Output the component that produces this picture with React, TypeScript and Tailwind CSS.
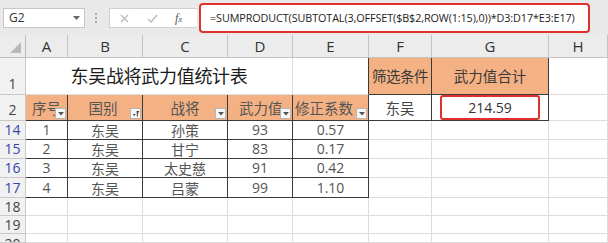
const CJK = "font-['Noto_Sans_CJK_SC','Noto_Sans',sans-serif]";
const NUM = "font-['Open_Sans','Noto_Sans_CJK_SC',sans-serif]";

const cols = ["A", "B", "C", "D", "E", "F", "G", "H"];

const rows = [
  { n: "14", no: "1", country: "东吴", name: "孙策", power: "93", k: "0.57" },
  { n: "15", no: "2", country: "东吴", name: "甘宁", power: "83", k: "0.17" },
  { n: "16", no: "3", country: "东吴", name: "太史慈", power: "91", k: "0.42" },
  { n: "17", no: "4", country: "东吴", name: "吕蒙", power: "99", k: "1.10" },
];

function FilterBtn({ active = false }: { active?: boolean }) {
  return (
    <span className="absolute right-px bottom-px w-[11px] h-[11px] bg-[#f7f7f7] border border-[#b5b5b5] flex items-center justify-center">
      {active ? (
        <svg width="8" height="8" viewBox="0 0 8 8">
          <path d="M4.5 1 L7.5 1 L5.8 3.5 L5.8 7 L4.8 6.2 L4.8 3.5 Z" fill="#444" />
          <path d="M0.8 4 L3.6 4 L2.2 6 Z" fill="#444" />
        </svg>
      ) : (
        <svg width="6" height="4" viewBox="0 0 6 4">
          <path d="M0 0 L6 0 L3 3.5 Z" fill="#555" />
        </svg>
      )}
    </span>
  );
}

function Gap() {
  return <div className="border-r border-b border-[#dcdcdc]" />;
}

function RowHead({ n, blue = false, align = "items-center" }: { n: string; blue?: boolean; align?: string }) {
  return (
    <div
      className={`bg-[#f1f1f1] border-r border-b border-[#c9c9c9] overflow-hidden flex ${align} justify-center text-[14px] leading-none ${NUM} ${
        blue ? "text-[#3646b0]" : "text-[#444]"
      }`}
    >
      {n}
    </div>
  );
}

export default function App() {
  return (
    <div className="w-[608px] h-[243px] overflow-hidden bg-white select-none">
      {/* formula bar */}
      <div className="h-[35px] bg-[#e9e9e9] flex items-start relative">
        <div className={`ml-[3px] mt-[8px] w-[82px] h-[20px] bg-white border border-[#c6c6c6] flex items-center pl-[5px] pr-[4px] text-[12px] text-[#333] ${NUM}`}>
          <span className="flex-1">G2</span>
          <svg width="7" height="4" viewBox="0 0 7 4">
            <path d="M0 0 L7 0 L3.5 4 Z" fill="#666" />
          </svg>
        </div>
        <div className="ml-[10px] mt-[13px] flex flex-col gap-[2px]">
          <span className="w-[2px] h-[2px] bg-[#aaa]" />
          <span className="w-[2px] h-[2px] bg-[#aaa]" />
          <span className="w-[2px] h-[2px] bg-[#aaa]" />
        </div>
        <div className="ml-[12px] mt-[8px] w-[88px] h-[20px] bg-white border-y border-l border-[#d0d0d0] flex items-center">
          <svg className="ml-[10px]" width="9" height="9" viewBox="0 0 9 9">
            <path d="M1 1 L8 8 M8 1 L1 8" stroke="#b8b8b8" strokeWidth="1.2" />
          </svg>
          <svg className="ml-[18px]" width="11" height="9" viewBox="0 0 11 9">
            <path d="M1 5 L4 8 L10 1" stroke="#b8b8b8" strokeWidth="1.3" fill="none" />
          </svg>
          <span className="ml-[17px] text-[12px] italic text-[#555] font-['Liberation_Serif',serif]">
            f<span className="text-[9px]">x</span>
          </span>
        </div>
        <div className="absolute left-[199px] top-[3px] w-[391px] h-[30px] bg-white border-2 border-[#e0322c] rounded-[4px] flex items-center pl-[9px]">
          <span className={`text-[10.8px] text-[#222] tracking-[-0.1px] whitespace-nowrap ${NUM}`}>
            =SUMPRODUCT(SUBTOTAL(3,OFFSET($B$2,ROW(1:15),0))*D3:D17*E3:E17)
          </span>
        </div>
      </div>

      {/* sheet grid */}
      <div className="grid grid-cols-[26px_42px_75px_85px_65px_76px_63px_117px_59px] grid-rows-[23px_37px_26px_19px_19px_19px_20px_18px_18px_9px]">
        {/* column headers */}
        <div className="bg-[#ececec] border-r border-b border-[#bdbdbd] relative">
          <svg className="absolute right-[4px] bottom-[4px]" width="11" height="11" viewBox="0 0 11 11">
            <path d="M11 0 L11 11 L0 11 Z" fill="#b9b9b9" />
          </svg>
        </div>
        {cols.map((c) => (
          <div
            key={c}
            className={`bg-[#ececec] border-r border-b border-[#c3c3c3] flex items-center justify-center text-[15px] text-[#333] ${NUM}`}
          >
            {c}
          </div>
        ))}

        {/* row 1 */}
        <RowHead n="1" align="items-end pb-[3px]" />
        <div className={`col-span-4 border-r border-b border-[#dcdcdc] flex items-center justify-center pb-[2px] text-[18px] text-[#1a1a1a] tracking-[-0.3px] ${CJK}`}>
          东吴战将武力值统计表
        </div>
        <div className="border-r border-b border-r-[#3a3a3a] border-b-[#dcdcdc]" />
        <div className={`bg-[#f4b183] border-r border-b border-[#3a3a3a] flex items-center justify-center text-[14.5px] text-[#3a3a3a] tracking-[-0.5px] ${CJK}`}>
          筛选条件
        </div>
        <div className={`bg-[#f4b183] border-r border-b border-[#3a3a3a] flex items-center justify-center text-[14.5px] text-[#3a3a3a] ${CJK}`}>
          武力值合计
        </div>
        <Gap />

        {/* row 2 headers */}
        <RowHead n="2" align="items-end pb-[3px]" />
        {[
          { t: "序号", active: false, cls: "justify-start pl-[6px]" },
          { t: "国别", active: true, cls: "justify-center pr-[4px]" },
          { t: "战将", active: false, cls: "justify-center" },
          { t: "武力值", active: false, cls: "justify-start pl-[11px]" },
          { t: "修正系数", active: false, cls: "justify-start pl-[2px]" },
        ].map((h) => (
          <div
            key={h.t}
            className={`relative overflow-hidden bg-[#f4b183] border-r border-b border-[#3a3a3a] flex items-center ${h.cls} text-[14.5px] text-[#555] whitespace-nowrap ${CJK}`}
          >
            {h.t}
            <FilterBtn active={h.active} />
          </div>
        ))}
        <div className={`border-r border-b border-[#3a3a3a] flex items-center justify-center text-[14.5px] text-[#444] ${CJK}`}>
          东吴
        </div>
        <div className="border-r border-b border-[#3a3a3a] flex items-stretch px-[8px]">
          <div className={`flex-1 border-2 border-[#e0322c] rounded-[3px] flex items-center justify-center text-[14px] text-[#333] ${NUM}`}>
            214.59
          </div>
        </div>
        <Gap />

        {/* data rows */}
        {rows.map((r) => (
          <div key={r.n} className="contents">
            <RowHead n={r.n} blue />
            {[
              { t: r.no, f: NUM },
              { t: r.country, f: CJK },
              { t: r.name, f: CJK },
              { t: r.power, f: NUM },
              { t: r.k, f: NUM },
            ].map((c, i) => (
              <div
                key={i}
                className={`border-r border-b border-[#3a3a3a] flex items-center justify-center text-[14px] leading-none text-[#555] ${c.f}`}
              >
                {c.t}
              </div>
            ))}
            <Gap />
            <Gap />
            <Gap />
          </div>
        ))}

        {/* empty rows */}
        <RowHead n="18" />
        {cols.map((c) => (
          <Gap key={c} />
        ))}
        <RowHead n="19" />
        {cols.map((c) => (
          <Gap key={c} />
        ))}
        <RowHead n="20" align="items-start pt-[3px]" />
        {cols.map((c) => (
          <Gap key={c} />
        ))}
      </div>
    </div>
  );
}
